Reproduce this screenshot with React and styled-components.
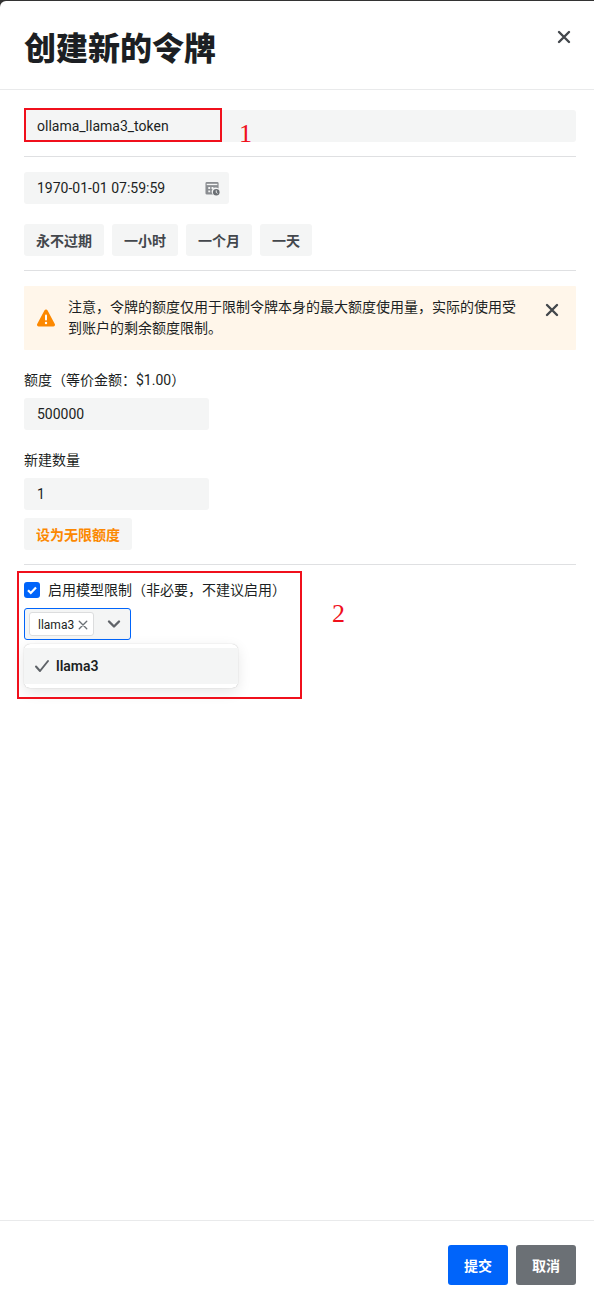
import React from 'react';
import styled, { createGlobalStyle } from 'styled-components';

const Global = createGlobalStyle`
  html, body { margin: 0; padding: 0; background: #fff; }
  body { font-family: Roboto, "Noto Sans CJK SC", "Noto Sans", sans-serif; color: #1c1f23; }
  * { box-sizing: border-box; }
`;
const Backdrop = styled.div`
  width: 594px; height: 1297px; background: #333;
  padding-top: 1px; overflow: hidden;
`;
const Sheet = styled.div`
  position: relative; width: 594px; height: 1296px; background: #fff;
  border-top-left-radius: 6px; display: flex; flex-direction: column;
`;
const Header = styled.header`
  height: 89px; flex: none; padding: 0 22px 0 24px; display: flex; justify-content: space-between;
  border-bottom: 1px solid #e9eaeb;
`;
const Title = styled.h1`
  margin: 26px 0 0; font-size: 32px; line-height: 44px; font-weight: 900; color: #1c1f23;
`;
const CloseButton = styled.span`
  margin: 28px 0 0 0; width: 16px; height: 16px; color: #43474c; display: flex;
`;
const Body = styled.main`
  flex: 1; padding: 20px 18px 0 24px; display: flex; flex-direction: column; width: 576px;
`;
const Field = styled.div`
  height: 32px; width: ${p => p.$w || '552px'}; flex: none; background: #f4f5f5; border-radius: 3px;
  padding: 0 9px 0 13px; font-size: 14px; line-height: 34px; color: #1c1f23;
  display: flex; justify-content: space-between; align-items: center;
  margin-top: ${p => p.$mt || 0}px;
`;
const Rule = styled.hr`
  margin: ${p => p.$mt}px 0 ${p => p.$mb}px; width: 552px; border: 0; border-top: 1px solid #dfe0e2; flex: none;
`;
const ButtonRow = styled.div`
  display: flex; gap: 8px; margin-top: ${p => p.$mt}px;
`;
const LightButton = styled.button`
  height: 32px; border: 0; border-radius: 3px; background: #f4f5f5; padding: 0 12px; font: inherit;
  font-size: 14px; font-weight: 600; color: ${p => p.$accent ? '#fc8800' : '#43474c'};
  display: flex; align-items: center;
`;
const Banner = styled.div`
  height: 64px; width: 552px; flex: none; background: #fff6ea; border-radius: 1px; padding: 11px 16px 0 12px;
  display: flex; font-size: 14px; line-height: 21px;
`;
const BannerIcon = styled.span`
  width: 20px; height: 20px; margin: 11px 12px 0 0; flex: none; color: #fc8800; display: flex;
`;
const BannerText = styled.div`
  width: 452px; color: #1c1f23;
`;
const BannerClose = styled.span`
  width: 16px; height: 16px; margin: 5px 0 0 27px; color: #43474c; display: flex; flex: none;
`;
const Label = styled.div`
  margin-top: ${p => p.$mt}px; font-size: 14px; line-height: 20px; color: #1c1f23;
`;
const CheckRow = styled.div`
  display: flex; align-items: center; gap: 8px; font-size: 14px; line-height: 20px; height: 20px;
`;
const Check = styled.span`
  width: 16px; height: 16px; border-radius: 3px; background: #0064fa; color: #fff; display: flex; flex: none;
  align-items: center; justify-content: center;
`;
const Select = styled.div`
  margin-top: 8px; width: 107px; height: 32px; border: 1px solid #0064fa; border-radius: 3px; background: #f4f5f5;
  display: flex; align-items: center; padding-left: 4px;
`;
const Tag = styled.span`
  width: 65px; height: 24px; border: 1px solid #dcddde; border-radius: 3px; background: #fff;
  font-size: 12px; display: flex; align-items: center; padding: 1px 0 0 8px; gap: 3px; color: #1c1f23;
`;
const TagX = styled.span`
  width: 12px; height: 12px; color: #6b7075; display: flex;
`;
const Chevron = styled.span`
  margin-left: 12px; width: 16px; height: 16px; color: #5f6368; display: flex;
`;
const Menu = styled.div`
  margin-top: 4px; width: 214px; height: 44px; border-radius: 6px; background: #fff; flex: none;
  box-shadow: 0 0 1px rgba(0,0,0,.3), 0 4px 14px rgba(0,0,0,.1); padding: 4px 0;
`;
const Option = styled.div`
  height: 36px; background: #f4f5f5; display: flex; align-items: center; padding-left: 10px; gap: 6px;
  font-size: 14px; font-weight: 600; color: #1c1f23;
`;
const OptionCheck = styled.span`
  width: 16px; height: 16px; color: #5f6368; display: flex;
`;
const Footer = styled.footer`
  height: 77px; flex: none; border-top: 1px solid #e9eaeb; padding: 24px 18px 0 0;
  display: flex; justify-content: flex-end; gap: 8px;
`;
const SolidButton = styled.button`
  width: 60px; height: 40px; border: 0; border-radius: 3px; background: ${p => p.$bg}; color: #fff;
  font: inherit; font-size: 14px; font-weight: 600;
`;
const Annotation = styled.div`
  position: absolute; border: 2px solid #f0101c; pointer-events: none;
  left: ${p => p.$x}px; top: ${p => p.$y}px; width: ${p => p.$w}px; height: ${p => p.$h}px;
`;
const AnnotationDigit = styled.span`
  position: absolute; left: ${p => p.$x}px; top: ${p => p.$y}px; color: #f0101c;
  font-family: "Liberation Serif", serif; font-size: 26px; line-height: 28px;
`;

const X = ({ w = 2.4 }) => (
  <svg viewBox="0 0 16 16" width="100%" height="100%" fill="none" stroke="currentColor" strokeWidth={w}>
    <path d="M3 3l10 10M13 3L3 13" strokeLinecap="round" />
  </svg>
);

export default function App() {
  return (
    <Backdrop>
      <Global />
      <Sheet>
        <Header>
          <Title>创建新的令牌</Title>
          <CloseButton><X /></CloseButton>
        </Header>
        <Body>
          <Field>ollama_llama3_token</Field>
          <Rule $mt={14} $mb={15} />
          <Field $w="205px">
            1970-01-01 07:59:59
            <svg width="15" height="15" viewBox="0 0 16 16">
              <path fill="#8a8d91" d="M2 1h11a1.5 1.5 0 0 1 1.5 1.5V8a4 4 0 0 0-6 6.5H2A1.5 1.5 0 0 1 .5 13V2.500A1.500 1.500 0 0 1 2 1z" />
              <rect x="1.800" y="3" width="11.400" height="1.400" fill="#f4f5f5" />
              <path fill="#f4f5f5" d="M3.500 6.500h2v2h-2zM7 6.500h2v2H7zM3.500 10h2v2h-2z" />
              <circle cx="12" cy="12" r="3.500" fill="#6b6f74" />
              <path d="M12 10v2.200l1.400 1" stroke="#f4f5f5" strokeWidth="1" fill="none" />
            </svg>
          </Field>
          <ButtonRow $mt={20}>
            <LightButton>永不过期</LightButton>
            <LightButton>一小时</LightButton>
            <LightButton>一个月</LightButton>
            <LightButton>一天</LightButton>
          </ButtonRow>
          <Rule $mt={14} $mb={15} />
          <Banner>
            <BannerIcon>
              <svg viewBox="0 0 20 20" width="20" height="20">
                <path fill="currentColor" d="M8.400 2.600a1.800 1.800 0 0 1 3.200 0l7.200 13.500a1.700 1.700 0 0 1-1.600 2.500H2.800a1.700 1.700 0 0 1-1.600-2.500z" />
                <rect x="9" y="6.500" width="2" height="6" rx="1" fill="#fff" />
                <circle cx="10" cy="15" r="1.200" fill="#fff" />
              </svg>
            </BannerIcon>
            <BannerText>注意，令牌的额度仅用于限制令牌本身的最大额度使用量，实际的使用受到账户的剩余额度限制。</BannerText>
            <BannerClose><X /></BannerClose>
          </Banner>
          <Label $mt={20}>额度（等价金额：$1.00）</Label>
          <Field $w="185px" $mt={8}>500000</Field>
          <Label $mt={20}>新建数量</Label>
          <Field $w="185px" $mt={8}>1</Field>
          <ButtonRow $mt={8}>
            <LightButton $accent>设为无限额度</LightButton>
          </ButtonRow>
          <Rule $mt={14} $mb={15} />
          <CheckRow>
            <Check>
              <svg width="12" height="12" viewBox="0 0 12 12" fill="none" stroke="currentColor" strokeWidth="2.200">
                <path d="M2 6.200l2.800 2.800L10 3.500" />
              </svg>
            </Check>
            启用模型限制（非必要，不建议启用）
          </CheckRow>
          <Select>
            <Tag>llama3<TagX><X w={1.800} /></TagX></Tag>
            <Chevron>
              <svg viewBox="0 0 16 16" width="16" height="16" fill="none" stroke="currentColor" strokeWidth="2.400" strokeLinecap="round" strokeLinejoin="round">
                <path d="M3 5.500l5 5 5-5" />
              </svg>
            </Chevron>
          </Select>
          <Menu>
            <Option>
              <OptionCheck>
                <svg viewBox="0 0 16 16" width="16" height="16" fill="none" stroke="currentColor" strokeWidth="2" strokeLinecap="round" strokeLinejoin="round">
                  <path d="M2 8.500l4 4.500 8-10" />
                </svg>
              </OptionCheck>
              llama3
            </Option>
          </Menu>
        </Body>
        <Footer>
          <SolidButton $bg="#0064fa">提交</SolidButton>
          <SolidButton $bg="#6b7075">取消</SolidButton>
        </Footer>
        <Annotation $x={24} $y={107} $w={198} $h={34} />
        <AnnotationDigit $x={239} $y={119}>1</AnnotationDigit>
        <Annotation $x={17} $y={570} $w={285} $h={128} />
        <AnnotationDigit $x={332} $y={599}>2</AnnotationDigit>
      </Sheet>
    </Backdrop>
  );
}
